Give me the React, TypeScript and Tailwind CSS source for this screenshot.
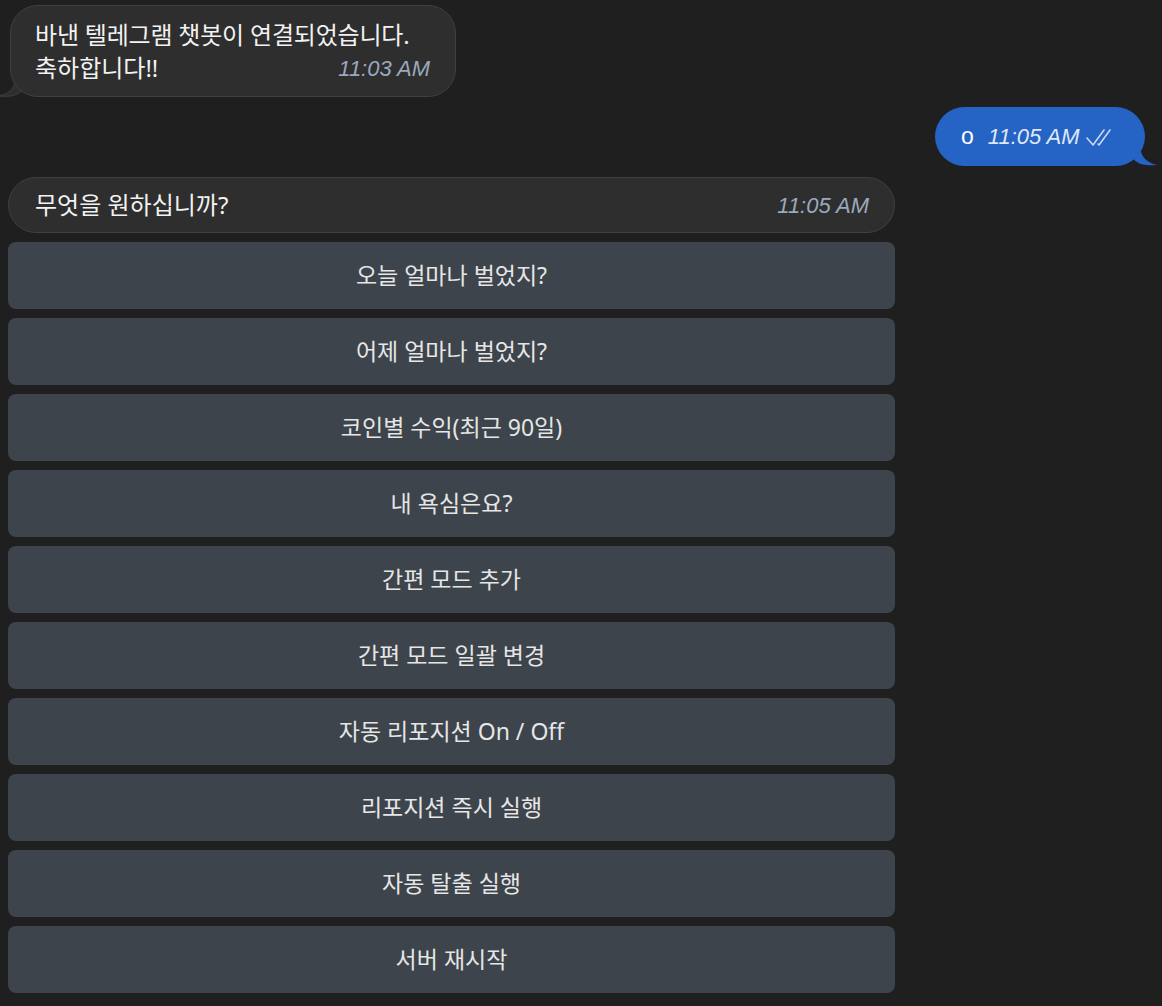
import React from 'react';

const buttons = [
  '오늘 얼마나 벌었지?',
  '어제 얼마나 벌었지?',
  '코인별 수익(최근 90일)',
  '내 욕심은요?',
  '간편 모드 추가',
  '간편 모드 일괄 변경',
  '자동 리포지션 On / Off',
  '리포지션 즉시 실행',
  '자동 탈출 실행',
  '서버 재시작',
];

const font = { fontFamily: '"Noto Sans", "Noto Sans CJK KR", sans-serif' };
const latin = { fontFamily: '"Liberation Sans", sans-serif' };

const App: React.FC = () => {
  return (
    <div className="min-h-screen w-full bg-[#1f1f1f] text-white" style={font}>
      <div className="flex flex-col pt-[5px]">
        {/* incoming */}
        <div className="relative ml-[10px] w-[446px]">
          <svg className="absolute left-[-10px] bottom-0" width="24" height="22" viewBox="0 0 24 22">
            <path d="M16 0 C16 10 12 18 0 21 C8 22 16 21 22 16 L22 0 Z" fill="#2e2e2e" />
            <path d="M16 0 C16 10 12 18 0 21 C8 22 16 21 22 16" fill="none" stroke="#404040" strokeWidth="1" />
          </svg>
          <div className="relative rounded-[28px] border border-[#404040] bg-[#2e2e2e] pl-[24px] pr-[25px] pt-[12px] pb-[12px]">
            <div className="text-[24px] leading-[33px] tracking-[-0.2px] text-[#f2f2f2]">바낸 텔레그램 챗봇이 연결되었습니다.</div>
            <div className="flex items-end justify-between">
              <span className="text-[24px] leading-[33px] text-[#f2f2f2]">축하합니다!!</span>
              <span className="text-[22px] italic leading-[30px] text-[#9aa9bd]" style={latin}>11:03 AM</span>
            </div>
          </div>
        </div>

        {/* outgoing */}
        <div className="mt-[10px] flex justify-end pr-[17px]">
          <div className="relative">
            <svg className="absolute right-[-13px] bottom-0" width="26" height="22" viewBox="0 0 26 22">
              <path d="M8 0 C8 10 12 18 25 21 C16 22 8 21 2 16 L2 0 Z" fill="#2563c5" />
            </svg>
            <div className="relative flex h-[59px] w-[210px] items-center rounded-[30px] bg-[#2563c5] pl-[26px]">
              <span className="text-[23px] text-white" style={latin}>o</span>
              <span className="ml-[14px] text-[22px] italic text-[#dfe8f7]" style={latin}>11:05 AM</span>
              <svg className="ml-[4px]" width="32" height="20" viewBox="0 0 32 20" fill="none" stroke="#c9d8f0" strokeWidth="1.6" strokeLinecap="round" strokeLinejoin="round">
                <path d="M3 11 L9 18 L20 3" />
                <path d="M14 17 L15 18 L26 3" />
              </svg>
            </div>
          </div>
        </div>

        {/* question */}
        <div className="ml-[8px] mt-[11px] w-[887px]">
          <div className="flex h-[56px] items-center justify-between rounded-[28px] border border-[#404040] bg-[#2e2e2e] pl-[26px] pr-[25px]">
            <span className="text-[24px] text-[#f2f2f2]">무엇을 원하십니까?</span>
            <span className="text-[22px] italic text-[#9aa9bd]" style={latin}>11:05 AM</span>
          </div>
          <div className="mt-[9px] flex flex-col gap-[9px] pb-[12px]">
            {buttons.map((b) => (
              <button
                key={b}
                className="flex h-[67px] w-full items-center justify-center rounded-[8px] bg-[#3d444b] text-[23px] text-[#e6e6e6]"
              >
                {b}
              </button>
            ))}
          </div>
        </div>
      </div>
    </div>
  );
};

export default App;
